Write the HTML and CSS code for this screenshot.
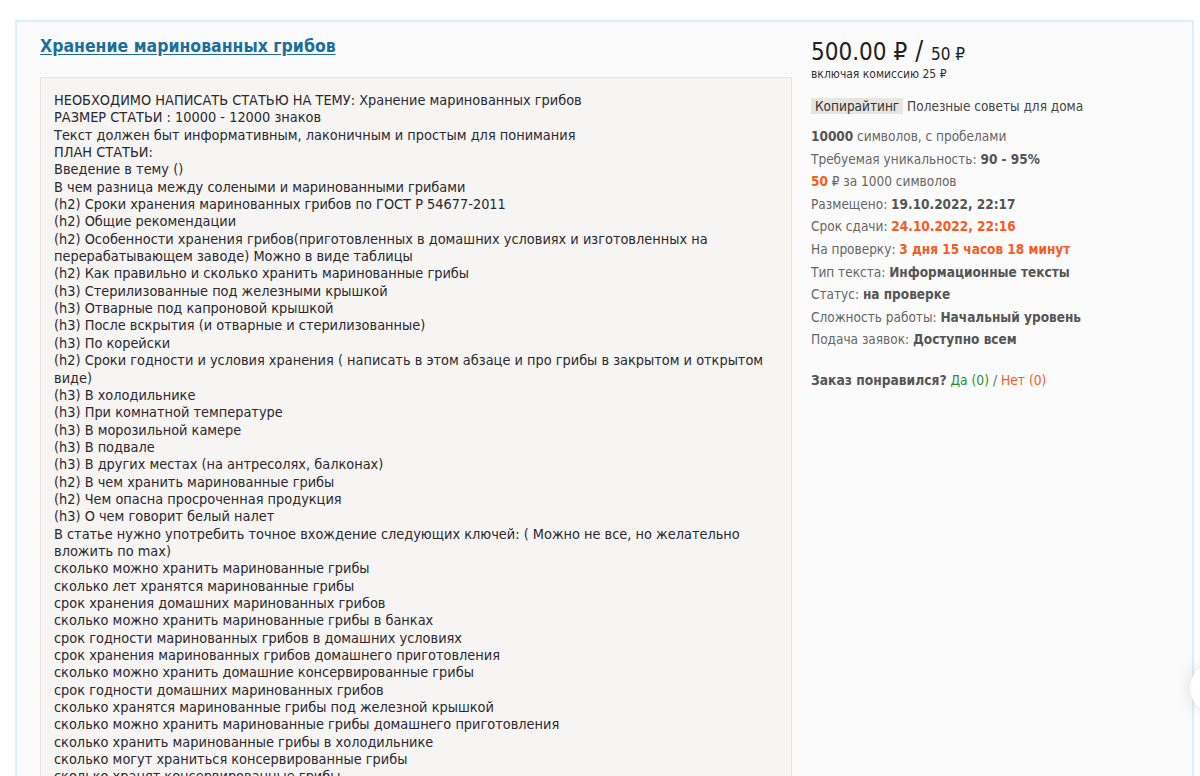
FILE: index.html
```html
<!DOCTYPE html>
<html lang="ru">
<head>
<meta charset="utf-8">
<link rel="stylesheet" href="styles.css">
</head>
<body>
<div class="page">
  <div class="card">
    <div class="main">
      <a class="title" href="#">Хранение маринованных грибов</a>
      <div class="desc">НЕОБХОДИМО НАПИСАТЬ СТАТЬЮ НА ТЕМУ: Хранение маринованных грибов
РАЗМЕР СТАТЬИ : 10000 - 12000 знаков
Текст должен быт информативным, лаконичным и простым для понимания
ПЛАН СТАТЬИ:
Введение в тему ()
В чем разница между солеными и маринованными грибами
(h2) Сроки хранения маринованных грибов по ГОСТ Р 54677-2011
(h2) Общие рекомендации
(h2) Особенности хранения грибов(приготовленных в домашних условиях и изготовленных на перерабатывающем заводе) Можно в виде таблицы
(h2) Как правильно и сколько хранить маринованные грибы
(h3) Стерилизованные под железными крышкой
(h3) Отварные под капроновой крышкой
(h3) После вскрытия (и отварные и стерилизованные)
(h3) По корейски
(h2) Сроки годности и условия хранения ( написать в этом абзаце и про грибы в закрытом и открытом виде)
(h3) В холодильнике
(h3) При комнатной температуре
(h3) В морозильной камере
(h3) В подвале
(h3) В других местах (на антресолях, балконах)
(h2) В чем хранить маринованные грибы
(h2) Чем опасна просроченная продукция
(h3) О чем говорит белый налет
В статье нужно употребить точное вхождение следующих ключей: ( Можно не все, но желательно вложить по max)
сколько можно хранить маринованные грибы
сколько лет хранятся маринованные грибы
срок хранения домашних маринованных грибов
сколько можно хранить маринованные грибы в банках
срок годности маринованных грибов в домашних условиях
срок хранения маринованных грибов домашнего приготовления
сколько можно хранить домашние консервированные грибы
срок годности домашних маринованных грибов
сколько хранятся маринованные грибы под железной крышкой
сколько можно хранить маринованные грибы домашнего приготовления
сколько хранить маринованные грибы в холодильнике
сколько могут храниться консервированные грибы
сколько хранят консервированные грибы</div>
    </div>
    <aside class="side">
      <div class="price"><span class="big">500.00 ₽</span><span class="slash">/</span><span class="small">50 ₽</span></div>
      <div class="commission">включая комиссию 25 ₽</div>
      <div class="cats"><span class="tag">Копирайтинг</span> <span class="sub">Полезные советы для дома</span></div>
      <ul class="info">
        <li><b>10000</b> символов, с пробелами</li>
        <li>Требуемая уникальность: <b>90 - 95%</b></li>
        <li><b class="hot">50</b> ₽ за 1000 символов</li>
        <li>Размещено: <b>19.10.2022, 22:17</b></li>
        <li>Срок сдачи: <b class="hot">24.10.2022, 22:16</b></li>
        <li>На проверку: <b class="hot">3 дня 15 часов 18 минут</b></li>
        <li>Тип текста: <b>Информационные тексты</b></li>
        <li>Статус: <b>на проверке</b></li>
        <li>Сложность работы: <b>Начальный уровень</b></li>
        <li>Подача заявок: <b>Доступно всем</b></li>
      </ul>
      <div class="like"><b>Заказ понравился?</b> <span class="yes">Да (0)</span> / <span class="no">Нет (0)</span></div>
    </aside>
  </div>
  <div class="fab"></div>
</div>
</body>
</html>
```
FILE: styles.css
```css
html, body {
  margin: 0;
  padding: 0;
  background: #ffffff;
  height: 776px;
  overflow: hidden;
}
body {
  font-family: "DejaVu Sans Condensed", "DejaVu Sans", sans-serif;
  color: #333;
}
.page {
  position: relative;
  padding: 20px 6px 0 15px;
}
.card {
  display: flex;
  border: 2px solid #d9effc;
  border-bottom: none;
  background: #fbfbfb;
  height: 800px;
  box-sizing: border-box;
}
.main {
  width: 752px;
  padding: 12px 0 0 23px;
  flex: none;
}
.title {
  display: inline-block;
  font-size: 17.5px;
  font-weight: bold;
  color: #1b6f9b;
  text-decoration: underline;
  text-underline-offset: 2px;
  line-height: 24px;
}
.desc {
  margin-top: 19px;
  background: #f6f5f3;
  border: 1px solid #e4e4e4;
  padding: 14px 14px 0 13px;
  white-space: pre-wrap;
  font-size: 14.4px;
  line-height: 17.34px;
  color: #2b2830;
  height: 800px;
  box-sizing: border-box;
}
.side {
  padding: 14px 0 0 19px;
  flex: 1;
}
.price {
  line-height: 30px;
  color: #222;
}
.price .big { font-size: 24px; }
.price .slash { font-size: 26px; margin: 0 8px 0 8px; }
.price .small { font-size: 17px; }
.commission {
  font-size: 12px;
  color: #333;
  line-height: 14px;
  margin-top: -3px;
}
.cats {
  margin-top: 17px;
  font-size: 13.5px;
  line-height: 17px;
  color: #444;
}
.tag {
  background: #e7e5e2;
  padding: 0 4px;
  color: #333;
}
.info {
  list-style: none;
  margin: 10px 0 0;
  padding: 0;
  font-size: 13.5px;
  line-height: 22.6px;
  color: #666;
}
.info b { color: #555; }
.info b.hot { color: #fb5a1e; }
.like {
  margin-top: 21px;
  font-size: 13.7px;
  color: #666;
}
.like b { color: #555; }
.yes { color: #2f8f2f; }
.no { color: #fb5a1e; }
.fab {
  position: absolute;
  left: 1190px;
  top: 663px;
  width: 50px;
  height: 50px;
  border-radius: 50%;
  background: #fff;
  box-shadow: 0 0 18px rgba(0,0,0,0.12);
}
```
